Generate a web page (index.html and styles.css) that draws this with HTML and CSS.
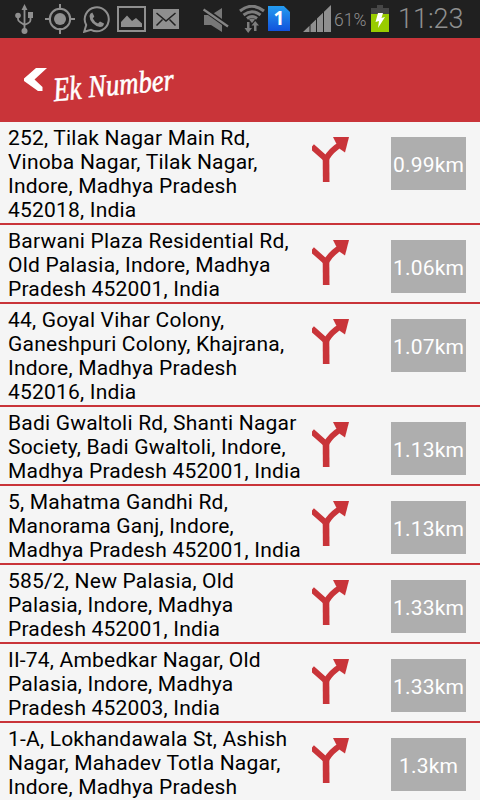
FILE: index.html
```html
<!DOCTYPE html>
<html>
<head>
	<meta charset="utf-8">
	<title>Ek Number</title>

	<link rel="stylesheet" href="styles.css">

</head>
<body>

	<svg class="defs">
		<symbol id="direction" viewBox="0 0 37 45">
			<path d="M14.2 45L14 22" fill="none" stroke="#c93439" stroke-width="6.6"/>
			<path d="M0 9.5L14 22Q19 13 30 6.500" fill="none" stroke="#c93439" stroke-width="5.800"/>
			<path d="M21 0H37L33 15.500L28 12L24 6Z" fill="#c93439"/>
		</symbol>
	</svg>

	<div class="status">
		<!-- usb -->
		<svg class="usb" width="18" height="30" viewBox="0 0 18 30">
			<g fill="none" stroke="#8f8f8f" stroke-width="1.800">
				<path d="M9.500 5V27M3 11V15Q3 17 5 18L9.500 21M15.500 12V16Q15.500 18 13.500 19L9.500 21"/>
			</g>
			<path d="M9.500 0L12.500 6H6.500Z M13 8H18V14H13Z" fill="#8f8f8f"/>
			<circle cx="3" cy="11.500" r="2.800" fill="#8f8f8f"/>
			<circle cx="9.500" cy="27" r="3" fill="#8f8f8f"/>
		</svg>
		<!-- location -->
		<svg class="gps" width="30" height="30" viewBox="0 0 30 30">
			<circle cx="15" cy="15" r="10.200" fill="none" stroke="#8f8f8f" stroke-width="2"/>
			<circle cx="15" cy="15" r="6" fill="#8f8f8f"/>
			<path d="M15 0V6M15 24V30M0 15H6M24 15H30" stroke="#8f8f8f" stroke-width="2"/>
		</svg>
		<!-- whatsapp -->
		<svg class="whatsapp" width="27" height="27" viewBox="0 0 27 27">
			<path d="M1.200 25.800L3.200 19A12 12 0 1 1 8 23.800Z" fill="none" stroke="#8f8f8f" stroke-width="2"/>
			<path d="M9.300 6.500L11.300 10.500L9.800 12.500Q11.500 16 15 17.500L17 15.500L21 17.500Q20.500 21 17 21Q13 20.500 9.500 17Q6.500 13.500 6.500 10Q6.800 7 9.300 6.500Z" fill="#8f8f8f"/>
		</svg>
		<!-- gallery -->
		<svg class="gallery" width="29" height="26" viewBox="0 0 29 26">
			<rect x="1" y="1" width="27" height="24" fill="none" stroke="#8f8f8f" stroke-width="2"/>
			<path d="M4 21V16L10 9.500L15 15L19 12L25 17.500V21Z" fill="#8f8f8f"/>
		</svg>
		<!-- mail -->
		<svg class="mail" width="26" height="20" viewBox="0 0 26 20">
			<rect width="26" height="20" fill="#8f8f8f"/>
			<path d="M3.500 4L13 12L22.500 4M3.500 16.500L9.500 10.500M22.500 16.500L16.500 10.500" fill="none" stroke="#202020" stroke-width="1.500"/>
		</svg>
		<!-- sound off -->
		<svg class="mute" width="26" height="24" viewBox="0 0 26 24">
			<path d="M1 7H8L19 0V24L8 17H1Z" fill="#777"/>
			<path d="M0 .5L26 19" stroke="#202020" stroke-width="5"/>
			<path d="M.5 1.500L25 18.500" stroke="#858585" stroke-width="2.400"/>
		</svg>
		<!-- wifi -->
		<svg class="wifi" width="26" height="28" viewBox="0 0 26 28">
			<g fill="none" stroke="#7d7d7d" stroke-width="3">
				<path d="M1 6Q13 -3.500 25 6"/>
				<path d="M4.500 10Q13 3.500 21.500 10"/>
				<path d="M8 13.500Q13 9.500 18 13.500"/>
			</g>
			<path d="M10 14.500Q13 12.500 16 14.500L13 18Z" fill="#7d7d7d"/>
			<path d="M8 17H10.500V23H13L9.200 28L5.500 23H8Z M15 26V20.500H12.500L16.200 16L20 20.500H17.500V26Z" fill="#7d7d7d"/>
		</svg>
		<div class="sim">1</div>
		<!-- signal -->
		<svg class="signal" width="28" height="27" viewBox="0 0 28 27">
			<path d="M0 27L6.500 20.700V27Z M7.500 27V19.800L13 14.500V27Z M14 27V13.500L20 7.700V27Z M21 27V6.700L28 0V27Z" fill="#8f8f8f"/>
		</svg>
		<span class="percent">61%</span>
		<!-- battery -->
		<svg class="battery" width="18" height="27" viewBox="0 0 18 27">
			<path d="M0 3H6V0H12V3H18V9H0Z" fill="#464646"/>
			<rect y="9" width="18" height="18" fill="#99cc00"/>
			<path d="M7 8H12L10.500 13L14 12L7 23L8 16L4.500 17Z" fill="#fff"/>
		</svg>
		<span class="clock">11:23</span>
	</div>

	<div class="header">
		<svg class="back" width="23" height="23" viewBox="0 0 23 23">
			<path d="M12 0H23L10.500 11.500L18.500 19V23H14L0 13V10.500Z" fill="#fff"/>
		</svg>
		<div class="logo"><span class="ek">Ek</span> <span class="number">Number</span></div>
	</div>

	<div class="list">
		<div class="item">
			<div class="address">252, Tilak Nagar Main Rd,<br>Vinoba Nagar, Tilak Nagar,<br>Indore, Madhya Pradesh<br>452018, India</div>
			<svg class="direction"><use href="#direction"/></svg>
			<div class="distance">0.99km</div>
		</div>
		<div class="item">
			<div class="address">Barwani Plaza Residential Rd,<br>Old Palasia, Indore, Madhya<br>Pradesh 452001, India</div>
			<svg class="direction"><use href="#direction"/></svg>
			<div class="distance">1.06km</div>
		</div>
		<div class="item">
			<div class="address">44, Goyal Vihar Colony,<br>Ganeshpuri Colony, Khajrana,<br>Indore, Madhya Pradesh<br>452016, India</div>
			<svg class="direction"><use href="#direction"/></svg>
			<div class="distance">1.07km</div>
		</div>
		<div class="item">
			<div class="address">Badi Gwaltoli Rd, Shanti Nagar<br>Society, Badi Gwaltoli, Indore,<br>Madhya Pradesh 452001, India</div>
			<svg class="direction"><use href="#direction"/></svg>
			<div class="distance">1.13km</div>
		</div>
		<div class="item">
			<div class="address">5, Mahatma Gandhi Rd,<br>Manorama Ganj, Indore,<br>Madhya Pradesh 452001, India</div>
			<svg class="direction"><use href="#direction"/></svg>
			<div class="distance">1.13km</div>
		</div>
		<div class="item">
			<div class="address">585/2, New Palasia, Old<br>Palasia, Indore, Madhya<br>Pradesh 452001, India</div>
			<svg class="direction"><use href="#direction"/></svg>
			<div class="distance">1.33km</div>
		</div>
		<div class="item">
			<div class="address">II-74, Ambedkar Nagar, Old<br>Palasia, Indore, Madhya<br>Pradesh 452003, India</div>
			<svg class="direction"><use href="#direction"/></svg>
			<div class="distance">1.33km</div>
		</div>
		<div class="item">
			<div class="address">1-A, Lokhandawala St, Ashish<br>Nagar, Mahadev Totla Nagar,<br>Indore, Madhya Pradesh</div>
			<svg class="direction"><use href="#direction"/></svg>
			<div class="distance">1.3km</div>
		</div>
	</div>

</body>
</html>
```

FILE: styles.css
```css
*{
	box-sizing: border-box;
}

body{
	margin: 0;
	height: 800px;
	overflow: hidden;
	background-color: #f5f5f5;
	font-family: Roboto, sans-serif;
	display: flex;
	flex-direction: column;
}

svg{
	display: block;
	flex: none;
}

.defs{
	width: 0;
	height: 0;
	position: absolute;
}

.status{
	height: 38px;
	flex: none;
	background-color: #202020;
	color: #8f8f8f;
	display: flex;
	align-items: flex-start;
	padding-left: 15px;
}

.usb{
	margin-top: 4px;
}

.gps{
	margin: 4px 0 0 12px;
}

.whatsapp{
	margin: 6px 0 0 8px;
}

.gallery{
	margin: 6px 0 0 7px;
}

.mail{
	margin: 9px 0 0 7px;
}

.mute{
	margin: 8px 0 0 24px;
}

.wifi{
	margin: 5px 0 0 10px;
}

.sim{
	width: 22px;
	height: 25px;
	margin: 6px 0 0 3px;
	background-image: linear-gradient(#249cf0, #1152dc);
	clip-path: polygon(0 0, 72% 0, 100% 24%, 100% 100%, 0 100%);
	color: #fff;
	font-family: "Noto Sans", sans-serif;
	font-size: 19px;
	font-weight: bold;
	line-height: 25px;
	text-align: center;
}

.signal{
	margin: 5px 0 0 13px;
}

.percent{
	width: 36px;
	margin: 9px 0 0 3px;
	font-size: 17.5px;
	font-weight: 300;
	line-height: 22px;
}

.battery{
	margin: 5px 0 0 1px;
}

.clock{
	margin: 4px 0 0 9px;
	font-size: 27px;
	font-weight: 300;
	line-height: 30px;
	white-space: nowrap;
}

.header{
	height: 84px;
	flex: none;
	background-color: #c93439;
	color: #fff;
	display: flex;
	align-items: flex-start;
	padding-left: 24px;
}

.back{
	margin-top: 30px;
}

.logo{
	display: flex;
	gap: 9px;
	margin: 29px 0 0 6px;
	font-family: "Liberation Serif", serif;
	font-style: italic;
	font-size: 31px;
	line-height: 36px;
	transform: rotate(-5deg);
	-webkit-text-stroke: .6px #fff;
}

.ek{
	width: 26px;
	font-size: 34px;
	transform: scaleX(.78);
	transform-origin: left;
}

.number{
	width: 86px;
	transform: scaleX(.86);
	transform-origin: left;
}

.item{
	display: flex;
	align-items: flex-start;
	border-bottom: 2px solid #c93439;
}

.address{
	width: 304px;
	padding: 4px 0 1px 8px;
	font-size: 21px;
	line-height: 24px;
	letter-spacing: .2px;
	color: #000;
	white-space: nowrap;
}

.direction{
	width: 37px;
	height: 45px;
	margin: 15px 0 0 8px;
}

.distance{
	width: 75px;
	height: 53px;
	margin: 15px 0 0 42px;
	background-color: #aeaeae;
	color: #fff;
	font-size: 21px;
	line-height: 57px;
	letter-spacing: .2px;
	text-align: center;
}
```
